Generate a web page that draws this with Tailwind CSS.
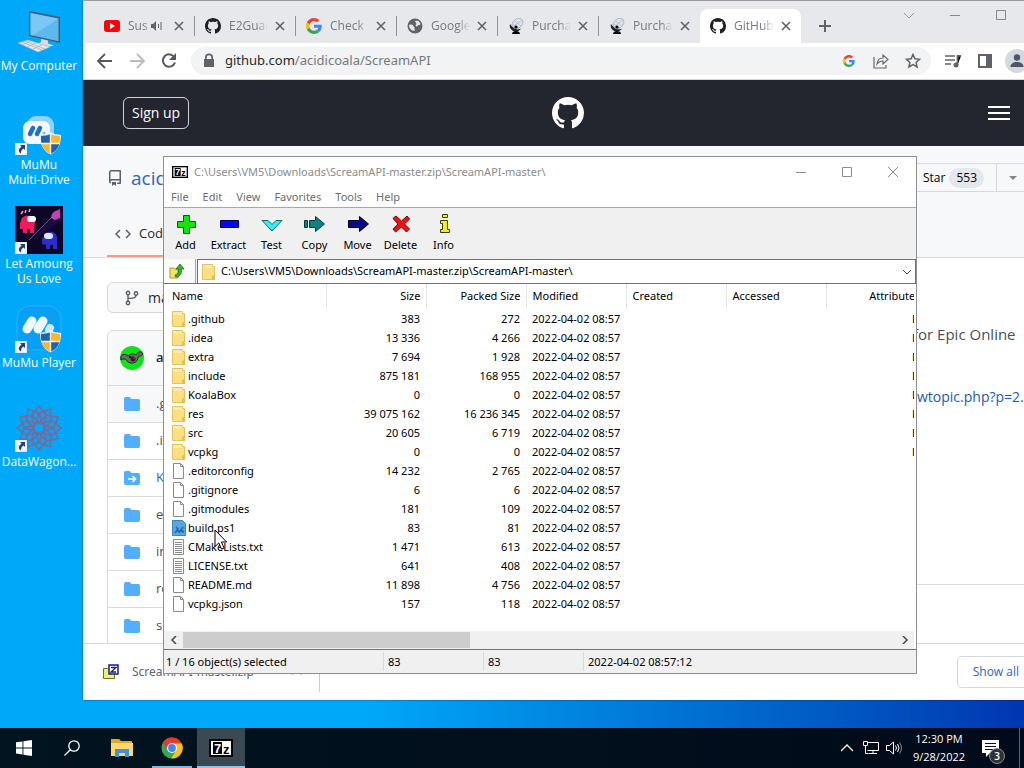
<!DOCTYPE html>
<html lang="en">

<head>
    <meta charset="UTF-8">
    <meta name="viewport" content="width=device-width, initial-scale=1.0">
    <title>Desktop</title>
    <script src="https://cdn.jsdelivr.net/npm/@tailwindcss/browser@4"></script>
</head>

<body class="h-screen flex flex-col overflow-hidden font-['Open_Sans',sans-serif] text-[11px] text-black">

    <!-- Shared icons -->
    <svg class="hidden">
        <symbol id="i-github" viewBox="0 0 16 16">
            <path fill="currentColor" d="M8 0C3.58 0 0 3.58 0 8c0 3.54 2.29 6.53 5.47 7.59.4.07.55-.17.55-.38 0-.19-.01-.82-.01-1.49-2.01.37-2.53-.49-2.69-.94-.09-.23-.48-.94-.82-1.13-.28-.15-.68-.52-.01-.53.63-.01 1.08.58 1.23.82.72 1.21 1.87.87 2.33.66.07-.52.28-.87.51-1.07-1.78-.2-3.64-.89-3.64-3.95 0-.87.31-1.59.82-2.15-.08-.2-.36-1.02.08-2.12 0 0 .67-.21 2.2.82.64-.18 1.32-.27 2-.27.68 0 1.36.09 2 .27 1.53-1.04 2.2-.82 2.2-.82.44 1.1.16 1.92.08 2.12.51.56.82 1.27.82 2.15 0 3.07-1.87 3.75-3.65 3.95.29.25.54.73.54 1.48 0 1.07-.01 1.93-.01 2.2 0 .21.15.46.55.38A8.013 8.013 0 0016 8c0-4.42-3.58-8-8-8z"/>
        </symbol>
        <symbol id="i-google" viewBox="0 0 48 48">
            <path fill="#ea4335" d="M24 9.5c3.5 0 6.7 1.2 9.2 3.6l6.9-6.9C35.9 2.4 30.5 0 24 0 14.6 0 6.5 5.4 2.6 13.2l8 6.2C12.400 13.700 17.700 9.500 24 9.500z"/>
            <path fill="#4285f4" d="M47 24.600c0-1.600-.2-3.100-.4-4.600H24v9h12.900c-.6 3-2.200 5.500-4.800 7.200l7.700 6C44.400 38 47 31.800 47 24.600z"/>
            <path fill="#fbbc05" d="M10.500 28.600A14.500 14.500 0 0 1 10.500 19.400l-8-6.200a24 24 0 0 0 0 21.600z"/>
            <path fill="#34a853" d="M24 48c6.500 0 11.900-2.100 15.900-5.800l-7.700-6c-2.200 1.500-4.900 2.300-8.200 2.300-6.300 0-11.600-4.200-13.500-9.900l-8 6.200C6.500 42.600 14.600 48 24 48z"/>
        </symbol>
        <symbol id="i-close" viewBox="0 0 16 16">
            <path stroke="#5f6368" stroke-width="1.600" d="M4 4l8 8M12 4l-8 8"/>
        </symbol>
        <symbol id="i-dish" viewBox="0 0 16 16">
            <ellipse cx="9.500" cy="5.500" rx="6" ry="4.500" transform="rotate(-40 9.500 5.500)" fill="#dfe4ec" stroke="#a3afc0" stroke-width=".8"/>
            <path d="M5 9l9-7M7 3l6 5M5 6l6 4" stroke="#a3afc0" stroke-width=".6" fill="none"/>
            <path d="M2 6c-1 3.500 1 6.500 5 7.500 3 0 5-1 6-3-3 1.500-6 1-8-1-1-1-2-2-3-3.500z" fill="#222"/>
            <circle cx="8" cy="9" r="1.600"/>
            <path d="M4 16c0-2 2-3 4-3s4 1 4 3z"/>
        </symbol>
        <symbol id="i-7z" viewBox="0 0 24 18">
            <rect x="1" y="1" width="22" height="16" fill="#fff" stroke="#000" stroke-width="2"/>
            <rect x="4" y="3" width="9" height="12"/>
            <text x="5" y="14" font-family="Liberation Sans" font-weight="700" font-size="13" fill="#fff">7</text>
            <text x="14" y="15" font-family="Liberation Sans" font-weight="700" font-size="13">z</text>
        </symbol>
        <symbol id="i-shortcut" viewBox="0 0 12 12">
            <path fill="#f4f6fa" stroke="#b8c4d4" stroke-width=".5" d="M0 0h12v12H0z"/>
            <path fill="#23406f" d="M5 2h5v5L8.300 5.400C6.500 6.600 6 8 6 10.500 2.800 8.500 3.500 5.500 6.600 3.700z"/>
        </symbol>
        <symbol id="i-shield" viewBox="0 0 22 23">
            <path fill="#f2f4f6" d="M11 0c3 2 7 2 11 2.500C22 12 19 19 11 23 3 19 0 12 0 2.500 4 2 8 2 11 0z"/>
            <path fill="#2463a8" d="M10.300 1.800v9H1.300C1 8 1 6 1 3.500c3.500-.2 6.500-.5 9.300-1.700zM11.700 12.200h8.500c-1.300 4.400-4 7.700-8.500 9.800z"/>
            <path fill="#fbb62c" d="M11.700 1.800c2.800 1.200 5.800 1.500 9.300 1.700 0 2.500 0 4.500-.3 7.300h-9zM10.300 12.200H1.800c1.300 4.400 4 7.700 8.500 9.800z"/>
        </symbol>
        <symbol id="i-zfolder" viewBox="0 0 14 18">
            <path fill="#fbdf84" stroke="#e6c25c" d="M.5 1.500h10v2h2v13H.5z"/>
            <path fill="#fcebaa" d="M1 2h9v3H1z"/>
            <path fill="#e8bf4e" d="M10 13l3-2v6h-3z"/>
        </symbol>
        <symbol id="i-zfile" viewBox="0 0 14 18">
            <path fill="#fdfdfd" stroke="#8b8b8b" d="M1.500 1.500h7l3 3v12h-10z"/>
            <path fill="none" stroke="#8b8b8b" d="M8.500 1.500v3h3"/>
        </symbol>
        <symbol id="i-ztext" viewBox="0 0 14 18">
            <path fill="#fdfdfd" stroke="#8b8b8b" d="M1.500 1.500h10v15h-10z"/>
            <path stroke="#8b8b8b" d="M3 4.500h7M3 6.500h7M3 8.500h7M3 10.500h7M3 12.500h7M3 14.500h7"/>
        </symbol>
        <symbol id="i-zps" viewBox="0 0 14 18">
            <path fill="#5aa6dd" stroke="#3585c4" d="M.5 1.500h10l3 3v12H.5z"/>
            <path fill="none" stroke="#1d68ad" stroke-width="1.600" d="M3 14l3-4-2-2M7 14l4-6M5 12h6v2"/>
        </symbol>
        <symbol id="i-folder" viewBox="0 0 16 16">
            <path fill="#54aeff" d="M1.750 1A1.750 1.750 0 0 0 0 2.750v10.500C0 14.216.784 15 1.750 15h12.500A1.750 1.750 0 0 0 16 13.250v-8.500A1.750 1.750 0 0 0 14.250 3H7.500a.25.25 0 0 1-.2-.1l-.9-1.200C6.070 1.260 5.550 1 5 1H1.750z"/>
        </symbol>
    </svg>

    <main class="relative flex-1 overflow-hidden bg-linear-to-r from-[#00a8fa] from-36% via-[#0074d4] via-66% to-[#0036b0]">

        <!-- Desktop icons -->
        <nav class="w-[78px] grid auto-rows-[99px] text-center text-[12px] leading-[15px] text-white">
            <a href="#" class="flex flex-col items-center pt-2 gap-[2px]">
                <svg class="w-12 h-12" viewBox="0 0 48 48">
                    <path fill="#4a5a6a" d="M14 3l31 6v26l-31-7z"/>
                    <path fill="#5cb8ee" d="M15.500 5l28 5.400v22.800l-28-6.300z"/>
                    <path fill="#8fd2f8" d="M15.500 5l28 5.400L18 27.400l-2.500-.5z" opacity=".6"/>
                    <path fill="#d8dde2" d="M26 31l7 1.500v3l6 2-7 1.500-10-3 4-2z"/>
                    <path fill="#e6e9ec" stroke="#aab2ba" stroke-width=".6" d="M3 35l10-3 22 7-12 5z"/>
                    <path stroke="#a5adb5" stroke-width=".7" d="M7 34l20 8M10 33l20 8M7 37l9-4M12 39l9-4M18 41l9-4"/>
                </svg>
                My Computer
            </a>
            <a href="#" class="flex flex-col items-center pt-2 gap-[2px]">
                <span class="relative">
                    <svg class="w-12 h-12" viewBox="0 0 48 48">
                        <rect x="12" y="9" width="27" height="27" rx="9" fill="#8fd3fb"/>
                        <rect x="8" y="14" width="27" height="23" rx="7" fill="#f4faff"/>
                        <path stroke="#1a70cc" stroke-width="4.500" stroke-linecap="round" d="M15 27l3-6M22 27l3-6"/>
                        <path stroke="#7cc2f3" stroke-width="3" stroke-linecap="round" d="M29 27l0-1"/>
                    </svg>
                    <svg class="absolute left-0 bottom-0 w-3 h-3"><use href="#i-shortcut"/></svg>
                    <svg class="absolute right-[2px] bottom-0 w-[21px] h-[23px]"><use href="#i-shield"/></svg>
                </span>
                MuMu<br>Multi-Drive
            </a>
            <a href="#" class="flex flex-col items-center pt-2 gap-[2px]">
                <span class="relative">
                    <svg class="w-12 h-12" viewBox="0 0 48 48">
                        <path fill="#0d0626" d="M0 0h48v48H0z"/>
                        <path fill="#1d0a3a" d="M48 0v14L14 36z"/>
                        <path stroke="#8b6bb5" stroke-width=".8" d="M45 3L14 34"/>
                        <path fill="#c044b4" d="M36 12c0-5 4-8 9-8v8l-5 2z"/>
                        <path fill="#f01a5c" d="M6 15c0-7 13-7 14 0l-1 12h-4v-4h-3v4H8v-4H5v-6z"/>
                        <rect x="12" y="10" width="9" height="6" rx="3" fill="#fff"/>
                        <path stroke="#ff9db8" stroke-width="1.500" d="M6 8l2-3M10 7l1-3M14 6l1-3"/>
                        <path fill="#2b2bd0" d="M29 31c0-7 12-7 13 0v12h-4v-4h-3v4h-4v-4l-4-1v-6z"/>
                        <rect x="29" y="27" width="9" height="6" rx="3" fill="#dfe8ff"/>
                    </svg>
                    <svg class="absolute left-0 bottom-0 w-3 h-3"><use href="#i-shortcut"/></svg>
                </span>
                Let Amoung<br>Us Love
            </a>
            <a href="#" class="flex flex-col items-center pt-2 gap-[2px]">
                <span class="relative">
                    <svg class="w-12 h-12" viewBox="0 0 48 48">
                        <rect x="2" y="1" width="44" height="44" rx="13" fill="#08a0f4" stroke="#2eb0f8"/>
                        <path stroke="#f0f8ff" stroke-width="9" stroke-linecap="round" d="M12 24l5-8M23 24l5-8"/>
                        <path stroke="#cfe8fb" stroke-width="8" stroke-linecap="round" d="M34 25l1-2"/>
                    </svg>
                    <svg class="absolute left-0 bottom-0 w-3 h-3"><use href="#i-shortcut"/></svg>
                    <svg class="absolute right-[2px] bottom-0 w-[21px] h-[23px]"><use href="#i-shield"/></svg>
                </span>
                MuMu Player
            </a>
            <a href="#" class="flex flex-col items-center pt-2 gap-[2px]">
                <span class="relative">
                    <svg class="w-12 h-12" viewBox="0 0 48 48" fill="none" stroke="#85648f" stroke-width="1.500">
                        <g id="petals">
                            <path d="M24 19l-7-8 7-9 7 9zM24 29l-7 8 7 9 7-9zM19 24l-8-7-9 7 9 7zM29 24l8-7 9 7-9 7z"/>
                        </g>
                        <use href="#petals" transform="rotate(30 24 24)"/>
                        <use href="#petals" transform="rotate(60 24 24)"/>
                        <circle cx="24" cy="24" r="6"/>
                    </svg>
                    <svg class="absolute left-0 bottom-0 w-3 h-3"><use href="#i-shortcut"/></svg>
                </span>
                DataWagon...
            </a>
        </nav>

        <!-- Browser window -->
        <section class="absolute left-[83px] right-[-46px] top-0 bottom-7 flex flex-col bg-white border-t border-[#9a9a9e] shadow-[0_0_2px_#0008] overflow-hidden">
            <header class="h-[42px] shrink-0 flex bg-[#e7e8ec] pl-[11px]">
                <div id="tabs" class="flex pt-2 text-[12px] text-[#75787c]"></div>
                <button aria-label="New tab" class="w-12 flex items-center justify-center pt-2">
                    <svg class="w-4 h-4" viewBox="0 0 16 16"><path stroke="#5f6368" stroke-width="2" d="M8 2v12M2 8h12"/></svg>
                </button>
                <div class="ml-auto flex h-7">
                    <button aria-label="Search tabs" class="w-[46px] flex items-center justify-center">
                        <svg class="w-3 h-3" viewBox="0 0 12 12"><path fill="none" stroke="#97999d" d="M1 4l5 5 5-5"/></svg>
                    </button>
                    <button aria-label="Minimize" class="w-[46px] flex items-center justify-center">
                        <svg class="w-3 h-3" viewBox="0 0 12 12"><path stroke="#85878b" d="M1 6.500h10"/></svg>
                    </button>
                    <button aria-label="Maximize" class="w-[46px] flex items-center justify-center">
                        <svg class="w-3 h-3" viewBox="0 0 12 12"><path fill="none" stroke="#85878b" d="M1.500 1.500h9v9h-9z"/></svg>
                    </button>
                    <button aria-label="Close" class="w-[46px] flex items-center justify-center">
                        <svg class="w-3 h-3" viewBox="0 0 12 12"><path stroke="#85878b" d="M1 1l10 10M11 1L1 11"/></svg>
                    </button>
                </div>
            </header>

            <div class="h-9 shrink-0 flex items-center pl-3">
                <button aria-label="Back" class="w-8">
                    <svg class="w-5 h-5" viewBox="0 0 20 20"><path fill="none" stroke="#55585c" stroke-width="1.800" d="M17 10H4M10 3l-7 7 7 7"/></svg>
                </button>
                <button aria-label="Forward" class="w-8">
                    <svg class="w-5 h-5" viewBox="0 0 20 20"><path fill="none" stroke="#b9bbbe" stroke-width="1.800" d="M3 10h13M10 3l7 7-7 7"/></svg>
                </button>
                <button aria-label="Reload" class="w-8">
                    <svg class="w-5 h-5" viewBox="0 0 20 20"><path fill="none" stroke="#55585c" stroke-width="2" d="M15.500 6.500A6.200 6.200 0 1 0 16 11.500"/><path fill="#55585c" d="M17 2v7h-7z"/></svg>
                </button>
                <div class="flex-1 h-7 flex items-center rounded-full bg-[#f1f3f4] pl-3 pr-2">
                    <svg class="w-3 h-4 mr-[10px]" viewBox="0 0 12 16"><path fill="#5f6368" d="M2 6V4.500a4 4 0 0 1 8 0V6h1v8H1V6zm1.700 0h4.600V4.500a2.300 2.300 0 0 0-4.600 0z"/></svg>
                    <a href="#" class="flex-1 font-['Noto_Sans',sans-serif] text-[13px] text-[#75787c]"><span class="text-[#27292d]">github.com</span>/acidicoala/ScreamAPI</a>
                    <div class="flex items-center gap-4">
                        <svg class="w-3 h-3 mx-[2px]"><use href="#i-google"/></svg>
                        <svg class="w-4 h-4" viewBox="0 0 16 16" fill="none" stroke="#66696d" stroke-width="1.200"><path d="M1 4v11h12v-3M4 11c.5-4 2.500-6 6-6V2l5 4.500-5 4.500V8c-3 0-4.500 1-6 3z"/></svg>
                        <svg class="w-4 h-4 mr-[2px]" viewBox="0 0 16 16"><path fill="none" stroke="#5f6368" stroke-width="1.500" d="M8 1.500l1.900 4.300 4.700.5-3.500 3.100 1 4.600L8 11.600 3.900 14l1-4.600L1.400 6.300l4.700-.5z"/></svg>
                    </div>
                </div>
                <div class="flex items-center gap-4 ml-[14px] mr-[41px]">
                    <svg class="w-4 h-4" viewBox="0 0 16 16"><path stroke="#5f6368" stroke-width="1.700" d="M0 3h10M0 7h10M0 11h6M12.500 12V2.900H16"/><circle cx="11" cy="12" r="2.500" fill="#5f6368"/></svg>
                    <svg class="w-4 h-4" viewBox="0 0 16 16"><path fill="#fff" stroke="#5f6368" stroke-width="2" d="M2 2h12v12H2z"/><path fill="#5f6368" d="M9 2h5v12H9z"/></svg>
                    <svg class="w-6 h-6 -ml-1" viewBox="0 0 24 24"><circle cx="12" cy="12" r="12" fill="#d5d8de"/><circle cx="12" cy="8.500" r="3.200" fill="#4d5566"/><path fill="#4d5566" d="M5.500 18c0-3.500 3-5 6.500-5s6.500 1.500 6.500 5z"/></svg>
                </div>
            </div>

            <div class="h-[67px] shrink-0 grid grid-cols-3 items-center bg-[#24262f] border-t border-[#d5d5d5] text-white pl-10 pr-[60px]">
                <a href="#" class="justify-self-start rounded-md border border-white/80 px-2 py-1 text-[14px] leading-[22px]">Sign up</a>
                <a href="#" aria-label="GitHub" class="justify-self-center ml-1"><svg class="w-8 h-8"><use href="#i-github"/></svg></a>
                <button aria-label="Menu" class="justify-self-end">
                    <svg class="w-[22px] h-4" viewBox="0 0 22 16"><path stroke="#fff" stroke-width="2" d="M0 2h22M0 8h22M0 14h22"/></svg>
                </button>
            </div>

            <div class="h-28 shrink-0 bg-[#f6f8fa] border-b border-[#d8dade] pl-6 flex justify-between">
                <div class="flex flex-col justify-between pt-4">
                    <div class="flex items-center gap-2">
                        <svg class="w-4 h-4" viewBox="0 0 16 16"><path fill="#57606a" d="M2 2.500A2.500 2.500 0 0 1 4.500 0h8.750a.75.75 0 0 1 .75.75v12.500a.75.75 0 0 1-.75.75h-2.500a.75.75 0 0 1 0-1.500h1.750v-2h-8a1 1 0 0 0-.714 1.700.75.75 0 0 1-1.072 1.050A2.495 2.495 0 0 1 2 11.500v-9zm10.500-1h-8a1 1 0 0 0-1 1v6.708A2.486 2.486 0 0 1 4.500 9h8V1.500zM5 12.250a.25.25 0 0 1 .25-.25h3.500a.25.25 0 0 1 .25.25v3.250a.25.25 0 0 1-.4.2l-1.450-1.087a.25.25 0 0 0-.3 0L5.400 15.700a.25.25 0 0 1-.4-.2v-3.250z"/></svg>
                        <a href="#" class="text-[19px] leading-8 text-[#3264be]">acidicoala</a>
                    </div>
                    <a href="#" class="w-24 h-11 flex items-center gap-2 pl-2 border-b-2 border-[#f79a8c] text-[13px] text-[#24292f]">
                        <svg class="w-4 h-4" viewBox="0 0 16 16"><path fill="none" stroke="#57606a" stroke-width="1.500" d="M5 4L1 8l4 4M11 4l4 4-4 4"/></svg>
                        Code
                    </a>
                </div>
                <div class="mt-[17px] w-[189px] h-[29px] flex items-center border-y border-[#d5d8dc] text-[12px] pl-[42px]">
                    <button class="flex items-center gap-1">Star <span class="rounded-full bg-[#e4e7eb] px-[7px] leading-5">553</span></button>
                    <button aria-label="Lists" class="ml-3 h-full border-l border-[#d5d8dc] pl-3">
                        <svg class="w-2 h-1" viewBox="0 0 8 4"><path fill="#80858b" d="M0 0h8L4 4z"/></svg>
                    </button>
                </div>
            </div>

            <div class="flex-1 min-h-0 flex overflow-hidden pl-6 text-[13px] text-[#4a4f55]">
                <div class="w-[560px] pt-6">
                    <button class="h-[31px] w-32 flex items-center gap-2 rounded-md border border-[#d5d8dc] bg-[#f6f8fa] px-4 text-[14px] text-[#24292f]">
                        <svg class="w-4 h-4" viewBox="0 0 16 16" fill="none" stroke="#57606a" stroke-width="1.400"><circle cx="4" cy="3" r="1.700"/><circle cx="4" cy="13" r="1.700"/><circle cx="12" cy="3.500" r="1.700"/><path d="M4 5v6M12 5c0 3-2 3-8 3.500"/></svg>
                        master
                    </button>
                    <div id="repo" class="mt-[17px] rounded-t-md border border-b-0 border-[#d8dade]">
                        <div class="h-[54px] flex items-center gap-3 rounded-t-md bg-[#f6f8fa] pl-3 font-semibold text-[#24292f]">
                            <svg class="w-6 h-6" viewBox="0 0 24 24"><circle cx="12" cy="12" r="12" fill="#0be41a"/><path fill="#6e6a6c" stroke="#222" d="M1 14c-1-6 4-7 7-4 2-2 6-3 8-1 2-4 6-4 7-1-1 2-4 2-5 3 0 6-7 8-11 4-1-2-3-3-6-1z"/><circle cx="13" cy="13" r="2.500" fill="#2d2022"/><circle cx="10" cy="11" r="1"/><path stroke="#a33" d="M13 12h2"/></svg>
                            acidicoala
                        </div>
                    </div>
                </div>
                <div class="flex-1 pl-[246px]">
                    <p class="pt-[63px] text-[15px] leading-[26px] whitespace-nowrap">for Epic Online</p>
                    <a href="#" class="block pt-10 pl-1 text-[14px] font-medium leading-[20px] text-[#2458b4]">wtopic.php?p=2...</a>
                    <div class="mt-[177px] border-t border-[#d8dade]"></div>
                </div>
            </div>

            <footer class="h-[57px] shrink-0 flex items-center border-t border-[#d8dade] bg-white pl-5 text-[12px] text-[#5f6368]">
                <svg class="w-4 h-4" viewBox="0 0 16 16"><path fill="#eef07a" stroke="#6d6d20" d="M.5 4.500h4l1 1h6v9H.500z"/><path fill="#fff" stroke="#1a1a8c" stroke-width="1.500" d="M6 1h9v9H6z"/><path fill="none" stroke="#1a1a8c" stroke-width="1.300" d="M8 3.500h5l-5 4.500h5"/></svg>
                <span class="ml-[13px] font-['Noto_Sans',sans-serif]">ScreamAPI-master.zip</span>
                <button aria-label="More" class="ml-[37px] mr-4">
                    <svg class="w-3 h-2" viewBox="0 0 12 8"><path fill="none" stroke="#5f6368" stroke-width="2" d="M1 6l5-4 5 4"/></svg>
                </button>
                <span class="h-10 border-l border-[#c9cbce]"></span>
                <button class="ml-auto mr-[35px] h-8 rounded border border-[#d5d8dc] px-[15px] text-[12px] font-medium text-[#3264be]">Show all</button>
            </footer>
        </section>

        <!-- Archive window -->
        <section class="absolute left-[163px] top-[156px] w-[754px] flex flex-col bg-white border border-[#8f8f8f] font-['Noto_Sans',sans-serif]">
            <header class="h-[30px] flex items-center pl-2 text-[#8c8c8c]">
                <svg class="w-4 h-3 mr-[6px]"><use href="#i-7z"/></svg>
                <h1 class="flex-1">C:\Users\VM5\Downloads\ScreamAPI-master.zip\ScreamAPI-master\</h1>
                <button aria-label="Minimize" class="w-[46px] flex justify-center"><svg class="w-3 h-3" viewBox="0 0 12 12"><path stroke="#8c8c8c" d="M1 6.500h10"/></svg></button>
                <button aria-label="Maximize" class="w-[46px] flex justify-center"><svg class="w-3 h-3" viewBox="0 0 12 12"><path fill="none" stroke="#8c8c8c" d="M1.500 1.500h9v9h-9z"/></svg></button>
                <button aria-label="Close" class="w-[46px] flex justify-center"><svg class="w-3 h-3" viewBox="0 0 12 12"><path stroke="#8c8c8c" d="M1 1l10 10M11 1L1 11"/></svg></button>
            </header>
            <nav class="h-5 flex items-center gap-[14px] pl-[7px] text-[#6d6d6d]">
                <button>File</button>
                <button>Edit</button>
                <button>View</button>
                <button>Favorites</button>
                <button>Tools</button>
                <button>Help</button>
            </nav>

            <div class="h-[52px] flex border-t border-[#a8a8a8] bg-[#f0f0f0] pb-[3px] leading-[17px]">
                <button class="w-[43px] flex flex-col items-center justify-center">
                    <svg class="w-6 h-6" viewBox="0 0 24 24"><path fill="#0ee60e" stroke="#0a5c0a" d="M9.500 3.500h6v6h6v6h-6v6h-6v-6h-6v-6h6z"/></svg>
                    Add
                </button>
                <button class="w-[43px] flex flex-col items-center justify-center">
                    <svg class="w-6 h-6" viewBox="0 0 24 24"><path fill="#0808f0" stroke="#000050" d="M3.500 8.500h18v7h-18z"/></svg>
                    Extract
                </button>
                <button class="w-[43px] flex flex-col items-center justify-center">
                    <svg class="w-6 h-6" viewBox="0 0 24 24"><path fill="#35f0f0" stroke="#0a6a6a" d="M2 8.500h6l4 4 4-4h6L12 19z"/></svg>
                    Test
                </button>
                <button class="w-[43px] flex flex-col items-center justify-center">
                    <svg class="w-6 h-6" viewBox="0 0 24 24"><path fill="#128080" stroke="#043a3a" d="M1.500 8.500h3v7h-3zM6.500 8.500h6v-4l9 7.500-9 7.500v-4h-6z"/></svg>
                    Copy
                </button>
                <button class="w-[43px] flex flex-col items-center justify-center">
                    <svg class="w-6 h-6" viewBox="0 0 24 24"><path fill="#0b0b85" stroke="#000030" d="M2.500 8.500h11v-4l9 7.500-9 7.500v-4h-11z"/></svg>
                    Move
                </button>
                <button class="w-[43px] flex flex-col items-center justify-center">
                    <svg class="w-6 h-6" viewBox="0 0 24 24"><path fill="#ee1212" stroke="#6a0606" d="M4 6.500L7 4l5.500 5L18 4l2.500 3-5 5 5 5-3 3-5-5-6 5-2.500-3 5-5z"/></svg>
                    Delete
                </button>
                <button class="w-[43px] flex flex-col items-center justify-center">
                    <svg class="w-6 h-6" viewBox="0 0 24 24"><path fill="#f5ee1e" stroke="#3a3a00" d="M10.500 2.500h5v3h-5zM8.500 8.500h7v9h2v3h-9v-3h2v-6h-2z"/></svg>
                    Info
                </button>
            </div>

            <div class="h-6 flex bg-[#f0f0f0]">
                <button aria-label="Up one level" class="w-8 mr-px flex items-center pl-[5px] bg-[#fafafa] border-r border-[#a8a8a8]">
                    <svg class="w-4 h-4" viewBox="0 0 16 16"><path fill="#f3e36a" stroke="#b59a2a" d="M1 5h4l1 1h3v9H1z"/><path fill="#3fae35" stroke="#1d6b18" stroke-width=".8" d="M6 12c3-1 4-3 3.500-6H7l4-5 4 5h-2.500c.5 5-2 8-6 8z"/></svg>
                </button>
                <div class="flex-1 flex items-center border border-b-0 border-[#707070] bg-white pl-1">
                    <svg class="w-[14px] h-[18px]"><use href="#i-zfolder"/></svg>
                    <input type="text" aria-label="Path" value="C:\Users\VM5\Downloads\ScreamAPI-master.zip\ScreamAPI-master\" class="flex-1 ml-[5px] outline-none">
                    <button aria-label="History" class="px-1"><svg class="w-2 h-2" viewBox="0 0 8 8"><path fill="none" stroke="#444" d="M0 2l4 4 4-4"/></svg></button>
                </div>
            </div>

            <div class="h-[367px] flex flex-col border-y border-[#707070]">
                <div class="flex-1 overflow-hidden mr-[2px]">
                    <table class="table-fixed w-[762px] text-right">
                        <thead>
                            <tr class="h-[25px] [&>th]:font-normal [&>th]:border-r [&>th]:border-[#e5e5e5]">
                                <th class="w-[162px] pl-2 text-left">Name</th>
                                <th class="w-[100px] pr-[5px]">Size</th>
                                <th class="w-[100px] pr-[5px]">Packed Size</th>
                                <th class="w-[100px] pl-[6px] text-left">Modified</th>
                                <th class="w-[100px] pl-[6px] text-left">Created</th>
                                <th class="w-[100px] pl-[6px] text-left">Accessed</th>
                                <th class="w-[100px] pr-[5px]">Attributes</th>
                            </tr>
                        </thead>
                        <tbody id="files"></tbody>
                    </table>
                </div>
                <div class="h-[18px] flex items-center bg-[#f0f0f0] mr-[2px]">
                    <button aria-label="Scroll left" class="w-[19px] flex justify-center"><svg class="w-2 h-2" viewBox="0 0 8 8"><path fill="none" stroke="#444" stroke-width="1.500" d="M6 0L2 4l4 4"/></svg></button>
                    <div class="w-[287px] h-4 bg-[#cdcdcd]"></div>
                    <button aria-label="Scroll right" class="ml-auto w-[18px] flex justify-center"><svg class="w-2 h-2" viewBox="0 0 8 8"><path fill="none" stroke="#444" stroke-width="1.500" d="M2 0l4 4-4 4"/></svg></button>
                </div>
            </div>

            <footer class="h-[23px] flex items-center bg-[#f0f0f0] leading-[19px]">
                <span class="w-[219px] pl-[2px]">1 / 16 object(s) selected</span>
                <span class="w-[100px] pl-1 border-l border-[#d8d8d8]">83</span>
                <span class="w-[100px] pl-1 border-l border-[#d8d8d8]">83</span>
                <span class="pl-1 border-l border-[#d8d8d8]">2022-04-02 08:57:12</span>
            </footer>
        </section>

        <!-- Mouse pointer -->
        <svg class="absolute left-[214px] top-[529px] w-[14px] h-[22px]" viewBox="0 0 14 22"><path fill="#fff" stroke="#000" d="M1 1v16.500l3.800-3.600 2.700 6.300 2.600-1.100-2.700-6.100h5.200z"/></svg>
    </main>

    <!-- Taskbar -->
    <footer class="h-10 shrink-0 flex items-stretch bg-linear-to-r from-[#02141f] to-[#010a1a] text-white">
        <button aria-label="Start" class="w-12 flex items-center justify-center">
            <svg class="w-4 h-4" viewBox="0 0 16 16"><path fill="#fff" d="M0 2.300l6.500-.9v6.100H0zM7.400 1.300L16 0v7.500H7.400zM0 8.400h6.500v6.100L0 13.600zM7.400 8.400H16V16l-8.600-1.200z"/></svg>
        </button>
        <button aria-label="Search" class="w-12 flex items-center justify-center">
            <svg class="w-4 h-4" viewBox="0 0 16 16"><circle cx="10" cy="6" r="5.200" fill="none" stroke="#fff" stroke-width="1.300"/><path stroke="#fff" stroke-width="1.300" d="M6.300 9.700L.5 15.500"/></svg>
        </button>
        <button aria-label="File Explorer" class="w-[52px] flex items-center justify-center">
            <svg class="w-[22px] h-5" viewBox="0 0 22 20"><path fill="#e5a823" d="M0 1h8l2 2h11v5H0z"/><path fill="#fbd870" d="M0 5h22v13H0z"/><path fill="#3d94d3" d="M4 11h14v8h-4v-4H8v4H4z"/></svg>
        </button>
        <button aria-label="Chrome" class="w-12 flex items-center justify-center">
            <span class="h-full w-10 flex items-center justify-center border-b-2 border-[#76b9ed] pt-[2px]">
                <svg class="w-[22px] h-[22px]" viewBox="0 0 48 48">
                    <circle cx="24" cy="24" r="23" fill="#34a853"/>
                    <path fill="#fbc116" d="M24 13h20.500A23 23 0 0 1 22 47l11.500-18z"/>
                    <path fill="#e33b2e" d="M4 12.500A23 23 0 0 1 44.500 14H24L14.500 29.500z"/>
                    <circle cx="24" cy="24" r="11" fill="#fff"/>
                    <circle cx="24" cy="24" r="8.500" fill="#4285f4"/>
                </svg>
            </span>
        </button>
        <button aria-label="7-Zip" class="w-12 ml-px flex items-center justify-center bg-[#3b4953] border-b-2 border-[#8cc4ee] pt-[2px]">
            <svg class="w-6 h-[18px]"><use href="#i-7z"/></svg>
        </button>
        <div class="ml-auto flex items-center">
            <svg class="w-3 h-3" viewBox="0 0 12 12"><path fill="none" stroke="#fff" stroke-width="1.300" d="M0 9l6-6 6 6"/></svg>
            <svg class="w-4 h-4 ml-[10px]" viewBox="0 0 16 16"><path fill="none" stroke="#fff" d="M4 2.500h11.500v8H4.500M10 10.500v3M6 13.500h8M.5 1.500h4v4h-4zM2.500 5.500v8h3"/></svg>
            <svg class="w-4 h-4 ml-[7px]" viewBox="0 0 16 16"><path fill="none" stroke="#fff" d="M.5 5.500h3l4-3.500v12l-4-3.500h-3zM9.500 5.500q2 2.500 0 5M11.500 4q3 4 0 8"/><path fill="none" stroke="#8a929a" d="M13.500 2.500q4 5.500 0 11"/></svg>
            <time class="ml-[10px] w-[54px] text-center leading-[18px]">12:30 PM<br>9/28/2022</time>
            <button aria-label="Notifications" class="relative ml-4">
                <svg class="w-[17px] h-[17px]" viewBox="0 0 17 17"><path fill="#fff" d="M0 0h17v13H8l-4 4v-4H0z"/><path stroke="#02101c" d="M3 3.500h11M3 6.500h11M3 9.500h8"/></svg>
                <span class="absolute left-[7px] top-2 w-4 h-4 rounded-full border border-[#8a8d92] bg-[#2d3138] text-[10px] leading-[14px] font-semibold">3</span>
            </button>
            <span class="ml-5 mr-1 h-10 border-l border-[#5b636d]"></span>
        </div>
    </footer>

    <script>
        const youtube = '<svg class="w-4 h-4" viewBox="0 0 16 16"><rect y="2" width="16" height="12" rx="3" fill="#f00"/><path fill="#fff" d="M6 5l5 3-5 3z"/></svg>';
        const globe = '<svg class="w-4 h-4" viewBox="0 0 16 16"><circle cx="8" cy="8" r="7.500" fill="#5f6368"/><path fill="#e7e8ec" d="M2 7c3-1 4 0 5 2 1 1 0 2 1 3.500-3 1-6-2-6-5.500zM8 3c3-1 5 1 5.500 3-1 2-2 0-3 2-1 1-2 0-2-1l1-1z"/></svg>';
        const icon = (id) => `<svg class="w-4 h-4"><use href="#${id}"/></svg>`;
        const sound = '<svg class="w-3 h-3 mr-1" viewBox="0 0 12 12"><path fill="#5f6368" d="M0 4h2l3-3v10L2 8H0z"/><path stroke="#5f6368" d="M7.500 4v4M10 2v8"/></svg>';

        const tabs = [
            [youtube, 'Sus', sound],
            [icon('i-github'), 'E2Guard'],
            [icon('i-google'), 'Check'],
            [globe, 'Google'],
            [icon('i-dish'), 'Purchas'],
            [icon('i-dish'), 'Purchas'],
            [icon('i-github'), 'GitHub'],
        ];
        document.getElementById('tabs').innerHTML = tabs.map(([ico, title, extra], i) => {
            const active = i === tabs.length - 1;
            const line = i < tabs.length - 2 ? 'border-r border-[#8f9196]' : '';
            return `<div class="w-[101px] flex items-center ${active ? 'bg-white rounded-t-lg' : ''}">
                <div class="w-full h-5 flex items-center pl-[10px] pr-[7px] text-[#202124] ${line}">
                    ${ico}
                    <a href="#" class="flex-1 min-w-0 ml-2 overflow-hidden whitespace-nowrap text-[#75787c] mask-r-from-70%">${title}</a>
                    ${extra || ''}
                    <button aria-label="Close tab" class="ml-1"><svg class="w-4 h-4"><use href="#i-close"/></svg></button>
                </div>
            </div>`;
        }).join('');

        // Repository listing, first row is highlighted
        const folders = ['.github', '.idea', 'KoalaBox', 'extra', 'include', 'res', 'src'];
        document.getElementById('repo').innerHTML += folders.map((name, i) => `
            <div class="h-[37px] flex items-center gap-4 pl-4 border-t border-[#d8dade] ${i === 0 ? 'bg-[#f6f8fa]' : ''}">
                <span class="relative w-4 h-4">
                    <svg class="w-4 h-4"><use href="#i-folder"/></svg>
                    ${name === 'KoalaBox' ? '<svg class="absolute inset-0 w-4 h-4" viewBox="0 0 16 16"><path fill="none" stroke="#fff" stroke-width="1.600" d="M4 9h7M8.500 6L11.500 9l-3 3"/></svg>' : ''}
                </span>
                <a href="#" class="${name === 'KoalaBox' ? 'text-[#3264be]' : ''}">${name}</a>
            </div>`).join('');

        const files = [
            ['.github', '383', '272', 'zfolder'],
            ['.idea', '13 336', '4 266', 'zfolder'],
            ['extra', '7 694', '1 928', 'zfolder'],
            ['include', '875 181', '168 955', 'zfolder'],
            ['KoalaBox', '0', '0', 'zfolder'],
            ['res', '39 075 162', '16 236 345', 'zfolder'],
            ['src', '20 605', '6 719', 'zfolder'],
            ['vcpkg', '0', '0', 'zfolder'],
            ['.editorconfig', '14 232', '2 765', 'zfile'],
            ['.gitignore', '6', '6', 'zfile'],
            ['.gitmodules', '181', '109', 'zfile'],
            ['build.ps1', '83', '81', 'zps'],
            ['CMakeLists.txt', '1 471', '613', 'ztext'],
            ['LICENSE.txt', '641', '408', 'ztext'],
            ['README.md', '11 898', '4 756', 'zfile'],
            ['vcpkg.json', '157', '118', 'zfile'],
        ];
        document.getElementById('files').innerHTML = files.map(([name, size, packed, type]) => `
            <tr class="h-[19px] leading-[18px]">
                <td class="pl-2"><div class="flex items-center gap-[2px]"><svg class="w-[14px] h-[18px]"><use href="#i-${type}"/></svg>${name}</div></td>
                <td class="pr-[6px]">${size}</td>
                <td class="pr-[6px]">${packed}</td>
                <td class="pl-[6px] text-left">2022-04-02 08:57</td>
                <td></td>
                <td></td>
                <td class="pr-[6px]">${type === 'zfolder' ? 'D' : ''}</td>
            </tr>`).join('');
    </script>

</body>

</html>
